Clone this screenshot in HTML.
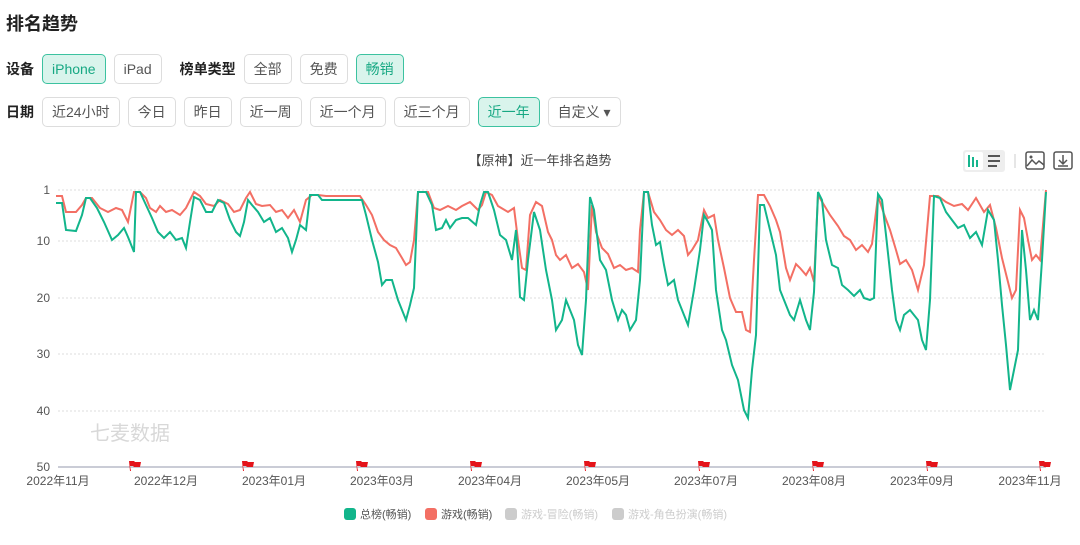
<!DOCTYPE html><html><head><meta charset="utf-8"><style>
body{margin:0;width:1080px;height:545px;background:#fff;font-family:"Liberation Sans","Noto Sans CJK SC",sans-serif;overflow:hidden;position:relative;color:#333}
.t{position:absolute;left:6px;top:10px;font-size:18px;font-weight:bold;color:#222}
.row{position:absolute;left:6px;display:flex;align-items:center;font-size:14px}
.lb{font-weight:bold;margin-right:8px;color:#222}
.b{border:1px solid #ddd;border-radius:5px;height:28px;line-height:28px;padding:0 9px;margin-right:8px;color:#555;font-size:14px}
.on{background:#d9f4ec;border-color:#3cc2a0;color:#17a883}
</style></head><body>
<div class="t">排名趋势</div>
<div class="row" style="top:54px"><span class="lb">设备</span><span class="b on">iPhone</span><span class="b">iPad</span><span class="lb" style="margin-left:10px">榜单类型</span><span class="b">全部</span><span class="b">免费</span><span class="b on">畅销</span></div>
<div class="row" style="top:97px"><span class="lb">日期</span><span class="b">近24小时</span><span class="b">今日</span><span class="b">昨日</span><span class="b">近一周</span><span class="b">近一个月</span><span class="b">近三个月</span><span class="b on">近一年</span><span class="b">自定义 ▾</span></div>
<div style="position:absolute;left:0;width:1080px;top:150px;text-align:center;font-size:13px;color:#444">【原神】近一年排名趋势</div>
<svg width="1080" height="545" style="position:absolute;left:0;top:0" font-family="Liberation Sans,Noto Sans CJK SC,sans-serif">
<rect x="963" y="150" width="42" height="22" rx="3" fill="#eee"/><rect x="965" y="152" width="18" height="18" rx="2" fill="#fff"/>
<g fill="#17b58e"><rect x="968" y="155" width="2" height="12"/><rect x="972" y="157" width="2" height="10"/><rect x="976" y="160" width="2" height="7"/></g>
<g fill="#555"><rect x="988" y="155" width="12" height="2"/><rect x="988" y="160" width="12" height="2"/><rect x="988" y="165" width="9" height="2"/></g>
<line x1="1015" y1="154" x2="1015" y2="168" stroke="#ccc"/>
<rect x="1026" y="152" width="18" height="17" rx="2" fill="none" stroke="#555" stroke-width="1.5"/><path d="M1027 166l5-6 4 4 3-3 5 4" fill="none" stroke="#555" stroke-width="1.5"/><circle cx="1031" cy="157" r="1.5" fill="#555"/>
<rect x="1054" y="152" width="18" height="17" rx="2" fill="none" stroke="#555" stroke-width="1.5"/><path d="M1063 155v8M1059 160l4 4 4-4M1058 166h10" fill="none" stroke="#555" stroke-width="1.5"/>
<g stroke="#ddd" stroke-dasharray="2,2"><line x1="58" y1="190" x2="1046" y2="190"/><line x1="58" y1="241" x2="1046" y2="241"/><line x1="58" y1="298" x2="1046" y2="298"/><line x1="58" y1="354" x2="1046" y2="354"/><line x1="58" y1="411" x2="1046" y2="411"/></g>
<line x1="58" y1="467" x2="1046" y2="467" stroke="#b8bcc8" stroke-width="1.5"/>
<g font-size="12" fill="#555" text-anchor="end"><text x="50" y="194">1</text><text x="50" y="245">10</text><text x="50" y="302">20</text><text x="50" y="358">30</text><text x="50" y="415">40</text><text x="50" y="471">50</text></g>
<text x="90" y="440" font-size="20" fill="#d8d8d8">七麦数据</text>
<g font-size="12" fill="#555" text-anchor="middle"><text x="58" y="485">2022年11月</text><text x="166" y="485">2022年12月</text><text x="274" y="485">2023年01月</text><text x="382" y="485">2023年03月</text><text x="490" y="485">2023年04月</text><text x="598" y="485">2023年05月</text><text x="706" y="485">2023年07月</text><text x="814" y="485">2023年08月</text><text x="922" y="485">2023年09月</text><text x="1030" y="485">2023年11月</text></g>
<polyline fill="none" stroke="#f36f64" stroke-width="2" points="56,196 62,196 66,212 76,212 82,205 86,198 92,198 100,208 108,212 116,208 122,210 128,222 134,192 140,192 146,198 150,208 156,212 160,206 166,212 172,210 180,215 186,208 190,200 194,192 200,196 206,204 214,206 220,200 228,204 234,212 240,210 246,198 250,192 256,204 262,206 270,205 276,212 282,210 288,218 294,210 300,222 306,200 312,195 318,195 326,196 360,196 366,205 372,215 378,232 384,240 390,245 396,248 402,258 406,265 410,262 414,240 418,192 428,192 434,208 440,210 448,206 456,210 462,206 470,202 478,210 482,205 486,192 492,195 498,206 508,212 514,208 518,240 522,268 526,270 530,215 536,202 542,206 548,232 552,240 556,255 560,260 566,255 572,268 578,264 584,272 588,290 592,205 596,232 602,248 608,254 614,268 620,265 626,270 632,268 638,272 640,230 644,192 648,192 654,212 660,220 666,230 672,235 678,230 684,236 688,255 692,250 698,240 704,210 708,218 714,215 718,240 724,268 730,298 736,312 742,312 746,330 750,332 754,260 758,195 764,195 770,206 776,220 780,232 786,268 790,280 796,264 800,268 806,275 810,268 814,282 818,195 824,205 830,215 838,226 844,236 850,240 856,250 862,245 868,252 872,244 878,196 884,214 890,230 896,250 900,264 906,260 912,270 918,290 924,265 930,196 938,196 946,202 954,206 962,204 968,210 976,198 984,212 990,205 996,228 1002,258 1008,282 1012,298 1016,290 1020,210 1024,218 1028,240 1032,260 1036,255 1040,260 1046,190"/>
<polyline fill="none" stroke="#12b58b" stroke-width="2" points="56,203 62,203 66,230 76,231 82,215 86,198 90,198 97,208 104,222 112,240 118,235 124,228 128,237 134,252 136,192 140,192 146,205 152,218 158,232 164,238 170,232 176,240 182,238 186,248 190,222 194,197 200,200 206,212 212,212 218,200 224,203 230,220 236,232 240,236 244,222 248,200 252,205 258,212 264,222 270,218 276,232 282,228 288,238 292,252 296,240 300,225 306,230 310,195 318,195 322,200 362,200 366,215 372,240 378,262 382,285 386,280 392,280 398,300 402,310 406,320 410,305 414,288 418,192 426,192 432,205 436,230 442,228 446,220 450,228 456,220 462,218 468,218 476,225 480,205 484,192 488,192 494,210 500,235 506,240 512,260 516,230 518,260 520,297 524,300 528,260 534,212 540,230 546,270 552,300 556,330 562,320 566,300 570,310 574,320 578,345 582,355 586,300 590,197 594,210 600,260 606,270 612,300 618,320 622,310 626,315 630,330 636,320 640,280 644,192 648,192 652,225 656,245 660,242 664,265 668,285 674,280 678,300 684,315 688,325 694,290 700,250 704,215 708,222 712,230 716,290 722,330 726,340 732,365 738,380 744,410 748,418 752,370 756,335 760,205 764,205 770,230 776,255 780,290 786,305 790,315 794,320 800,300 806,320 810,330 814,292 818,192 822,200 826,240 832,265 838,268 842,285 848,290 854,296 860,290 864,298 870,300 874,298 878,194 882,200 886,235 892,290 896,320 900,330 904,315 910,310 918,320 922,340 926,350 930,300 934,196 940,198 946,212 952,220 958,228 964,225 970,238 976,232 982,245 988,210 994,220 998,260 1002,305 1006,345 1010,390 1014,370 1018,350 1022,230 1026,270 1030,320 1034,310 1038,320 1042,260 1046,192"/>
<g fill="#e4141b">
<path id="f" d="M129 461h5l1 1h6l-1 5h-6l-1-1h-3l1 5h-1z"/>
<use href="#f" x="113"/><use href="#f" x="227"/><use href="#f" x="341"/><use href="#f" x="455"/><use href="#f" x="569"/><use href="#f" x="683"/><use href="#f" x="797"/><use href="#f" x="910"/>
</g>
<g font-size="11"><rect x="344" y="508" width="12" height="12" rx="3" fill="#12b58b"/><text x="360" y="518" fill="#555">总榜(畅销)</text>
<rect x="425" y="508" width="12" height="12" rx="3" fill="#f36f64"/><text x="441" y="518" fill="#555">游戏(畅销)</text>
<rect x="505" y="508" width="12" height="12" rx="3" fill="#ccc"/><text x="521" y="518" fill="#ccc">游戏-冒险(畅销)</text>
<rect x="612" y="508" width="12" height="12" rx="3" fill="#ccc"/><text x="628" y="518" fill="#ccc">游戏-角色扮演(畅销)</text></g>
</svg>
</body></html>
